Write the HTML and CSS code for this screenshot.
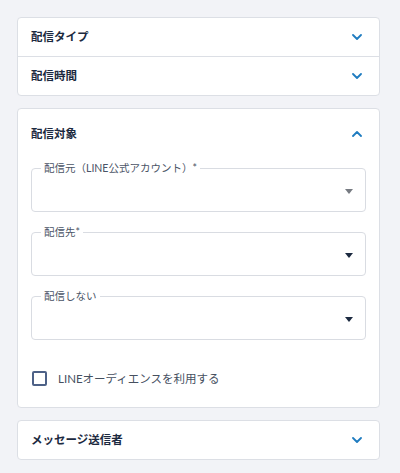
FILE: index.html
```html
<!DOCTYPE html>
<html lang="ja">
<head>
<meta charset="utf-8">
<link rel="stylesheet" href="styles.css">
</head>
<body>
<div class="page">
  <section class="card">
    <div class="row">
      <h2 class="title">配信タイプ</h2>
      <svg class="chev" viewBox="0 0 10 6"><path d="M1 1l4 4 4-4"/></svg>
    </div>
    <div class="row row-divided">
      <h2 class="title">配信時間</h2>
      <svg class="chev" viewBox="0 0 10 6"><path d="M1 1l4 4 4-4"/></svg>
    </div>
  </section>

  <section class="card card-open">
    <div class="open-head">
      <h2 class="title">配信対象</h2>
      <svg class="chev" viewBox="0 0 10 6"><path d="M1 5l4-4 4 4"/></svg>
    </div>
    <div class="fields">
      <fieldset class="field">
        <legend class="legend">配信元（LINE公式アカウント）*</legend>
        <div class="select">
          <span class="arrow arrow-muted"></span>
        </div>
      </fieldset>
      <fieldset class="field">
        <legend class="legend">配信先*</legend>
        <div class="select">
          <span class="arrow"></span>
        </div>
      </fieldset>
      <fieldset class="field">
        <legend class="legend">配信しない</legend>
        <div class="select">
          <span class="arrow"></span>
        </div>
      </fieldset>
    </div>
    <label class="check">
      <span class="box"></span>
      <span class="check-text">LINEオーディエンスを利用する</span>
    </label>
  </section>

  <section class="card">
    <div class="row">
      <h2 class="title">メッセージ送信者</h2>
      <svg class="chev" viewBox="0 0 10 6"><path d="M1 1l4 4 4-4"/></svg>
    </div>
  </section>
</div>
</body>
</html>
```

FILE: styles.css
```css
html, body {
  margin: 0;
  padding: 0;
  background: #f2f3f7;
}
body {
  font-family: "Lato", "Noto Sans CJK JP", sans-serif;
  color: #1c2a40;
}
.page {
  padding: 17px 20px 0 17px;
  display: flex;
  flex-direction: column;
  gap: 12px;
}
.card {
  background: #fff;
  border: 1px solid #dcdfe5;
  border-radius: 4px;
}
.row {
  height: 38px;
  display: flex;
  align-items: center;
  justify-content: space-between;
  padding: 0 17px 0 13px;
}
.row-divided {
  border-top: 1px solid #dcdfe5;
}
.title {
  margin: 0;
  font-size: 11.5px;
  font-weight: 700;
  line-height: 20px;
  color: #1c2a40;
}
.chev {
  width: 10px;
  height: 6px;
  fill: none;
  stroke: #1f7cc0;
  stroke-width: 1.8;
  stroke-linecap: round;
  stroke-linejoin: round;
}
.card-open {
  padding: 15px 13px 19px 13px;
}
.open-head {
  display: flex;
  align-items: center;
  justify-content: space-between;
  padding-right: 4px;
}
.fields {
  margin-top: 16px;
  display: flex;
  flex-direction: column;
  gap: 12px;
}
.field {
  margin: 0;
  padding: 0 12px 0 9px;
  border: 1px solid #d9dce2;
  border-radius: 4px;
  min-width: 0;
}
.legend {
  padding: 0 3px;
  font-size: 10.5px;
  line-height: 16px;
  color: #4a5466;
}
.select {
  height: 39px;
  display: flex;
  align-items: center;
  justify-content: flex-end;
  margin-top: -4px;
}
.arrow {
  width: 0;
  height: 0;
  border-left: 4.5px solid transparent;
  border-right: 4.5px solid transparent;
  border-top: 5px solid #1c2a40;
}
.arrow-muted {
  border-top-color: #777b82;
}
.check {
  margin-top: 28px;
  display: flex;
  align-items: center;
  gap: 11px;
  height: 20px;
}
.box {
  width: 11px;
  height: 11px;
  border: 2px solid #4d6187;
  border-radius: 2px;
  box-sizing: content-box;
  margin-left: 1px;
}
.check-text {
  font-size: 11.5px;
  color: #46505f;
}
```
